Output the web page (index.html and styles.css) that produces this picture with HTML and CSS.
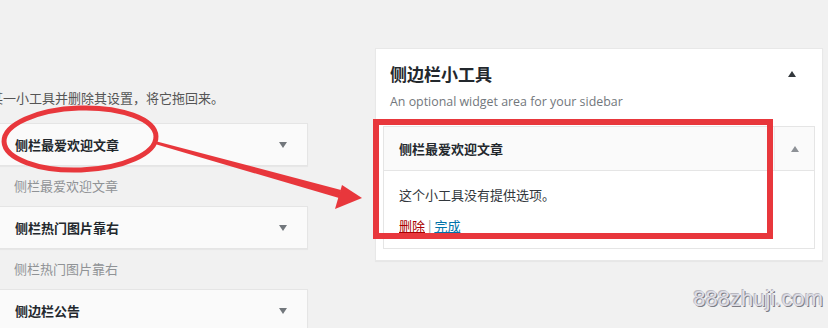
FILE: index.html
```html
<!DOCTYPE html>
<html lang="zh-CN">
<head>
    <meta charset="UTF-8">
    <title>小工具</title>
    <link rel="stylesheet" href="styles.css">
</head>
<body>
    <div class="page">
        <div class="available">
            <p class="hint">某一小工具并删除其设置，将它拖回来。</p>

            <div class="widget">
                <div class="widget-top">
                    <div class="widget-title">侧栏最爱欢迎文章</div>
                    <div class="widget-toggle"><span class="arrow-down"></span></div>
                </div>
                <div class="widget-desc">侧栏最爱欢迎文章</div>
            </div>

            <div class="widget">
                <div class="widget-top">
                    <div class="widget-title">侧栏热门图片靠右</div>
                    <div class="widget-toggle"><span class="arrow-down"></span></div>
                </div>
                <div class="widget-desc">侧栏热门图片靠右</div>
            </div>

            <div class="widget">
                <div class="widget-top">
                    <div class="widget-title">侧边栏公告</div>
                    <div class="widget-toggle"><span class="arrow-down"></span></div>
                </div>
            </div>
        </div>

        <div class="sidebar">
            <div class="sidebar-name">
                <h2>侧边栏小工具</h2>
                <span class="arrow-up dark"></span>
            </div>
            <div class="sidebar-desc">An optional widget area for your sidebar</div>

            <div class="sidebar-widget">
                <div class="sidebar-widget-top">
                    <div class="widget-title">侧栏最爱欢迎文章</div>
                    <div class="sidebar-toggle"><span class="arrow-up"></span></div>
                </div>
                <div class="widget-inside">
                    <p class="no-options">这个小工具没有提供选项。</p>
                    <div class="widget-control">
                        <a href="#" class="remove">删除</a> <span class="sep">|</span> <a href="#" class="done">完成</a>
                    </div>
                </div>
            </div>
        </div>
    </div>

    <!-- annotations drawn over the screenshot -->
    <svg class="marks" width="828" height="328" viewBox="0 0 828 328">
        <ellipse cx="80" cy="139" rx="76" ry="31" fill="none" stroke="#e8373c" stroke-width="5" transform="rotate(-2 80 139)"/>
        <polygon points="155,141 155,144 339,198 341,190" fill="#e8373c"/>
        <polygon points="342,185 362,198 335,209" fill="#e8373c"/>
        <rect x="376" y="122" width="394" height="114" fill="none" stroke="#e8373c" stroke-width="6"/>
    </svg>

    <div class="watermark">888zhuji.com</div>
</body>
</html>
```

FILE: styles.css
```css
html, body {
    margin: 0;
    padding: 0;
}

body {
    position: relative;
    width: 828px;
    height: 328px;
    overflow: hidden;
    background-color: #f1f1f1;
    font-family: "Noto Sans CJK SC", "Open Sans", sans-serif;
    font-size: 13px;
    color: #23282d;
}

.page {
    display: flex;
    align-items: flex-start;
    gap: 67px;
}

.available {
    width: 309px;
    margin-left: -1px;
    padding-top: 88px;
}

.hint {
    margin: 0 0 15px 0;
    line-height: 20px;
    text-indent: -9px;
    white-space: nowrap;
    color: #555;
}

.widget-top {
    display: flex;
    align-items: center;
    height: 41px;
    background: #fafafa;
    border: 1px solid #e5e5e5;
    box-shadow: 0 1px 1px rgba(0,0,0,0.04);
}

    .widget-top .widget-title {
        flex: 1;
        padding-left: 15px;
    }

.widget-title {
    font-weight: bold;
    font-size: 13px;
    line-height: 20px;
    color: #23282d;
}

.widget-toggle {
    width: 40px;
    display: flex;
    justify-content: center;
    margin-right: 4px;
}

.widget-desc {
    padding: 10px 15px;
    line-height: 20px;
    color: #909396;
}

.arrow-down {
    width: 0;
    height: 0;
    border-left: 4px solid transparent;
    border-right: 4px solid transparent;
    border-top: 6px solid #72777c;
}

.arrow-up {
    width: 0;
    height: 0;
    border-left: 4px solid transparent;
    border-right: 4px solid transparent;
    border-bottom: 6px solid #8d9196;
}

    .arrow-up.dark {
        border-bottom-color: #32373c;
    }

.sidebar {
    width: 446px;
    margin-top: 48px;
    padding: 0 0 11px 0;
    background: #fff;
    border: 1px solid #e8e8e8;
    box-shadow: 0 1px 1px rgba(0,0,0,0.04);
}

.sidebar-name {
    display: flex;
    align-items: center;
    justify-content: space-between;
    padding: 13px 26px 0 14px;
}

    .sidebar-name h2 {
        margin: 0;
        font-size: 17px;
        line-height: 24px;
        font-weight: bold;
        color: #23282d;
    }

.sidebar-desc {
    margin-top: 6px;
    padding-left: 14px;
    font-family: "Open Sans", sans-serif;
    font-size: 12.4px;
    line-height: 20px;
    color: #72777c;
}

.sidebar-widget {
    margin: 14px 7px 0 7px;
    border: 1px solid #e5e5e5;
}

.sidebar-widget-top {
    display: flex;
    align-items: stretch;
    height: 43px;
    background: #fafafa;
    border-bottom: 1px solid #e5e5e5;
}

    .sidebar-widget-top .widget-title {
        flex: 1;
        display: flex;
        align-items: center;
        padding-left: 15px;
        font-weight: 600;
    }

.sidebar-toggle {
    width: 39px;
    display: flex;
    align-items: center;
    justify-content: center;
    border-left: 1px solid #ececec;
}

.widget-inside {
    padding: 14px 15px 12px 15px;
    background: #fff;
}

.no-options {
    margin: 0 0 11px 0;
    line-height: 20px;
    color: #32373c;
}

.widget-control {
    line-height: 20px;
}

    .widget-control a {
        text-decoration: underline;
    }

    .widget-control .remove {
        color: #a00;
    }

    .widget-control .done {
        color: #0073aa;
    }

    .widget-control .sep {
        color: #999;
    }

.marks {
    position: absolute;
    top: 0;
    left: 0;
    pointer-events: none;
}

.watermark {
    position: absolute;
    right: 5px;
    bottom: 17px;
    font-family: "Liberation Sans", Arial, sans-serif;
    font-size: 22px;
    line-height: 24px;
    color: #dedee6;
    text-shadow: 1px 1px 0 #7d7d85, -1px -1px 0 #b8b8c0;
}
```
